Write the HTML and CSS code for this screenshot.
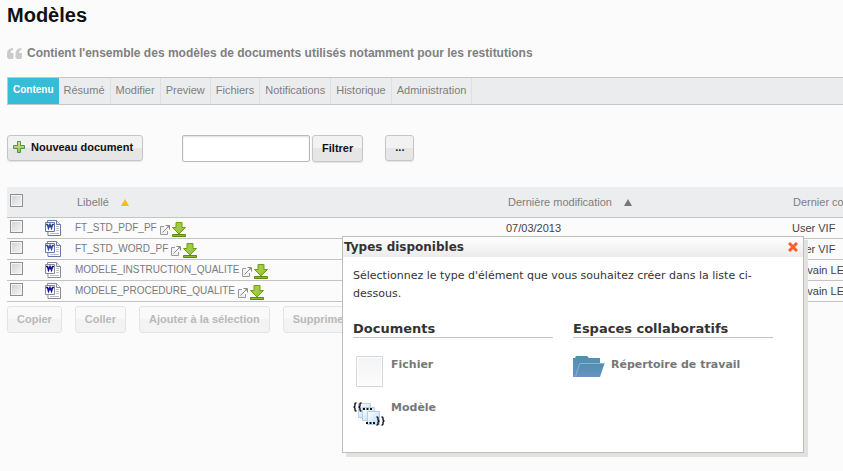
FILE: index.html
```html
<!DOCTYPE html>
<html lang="fr">
<head>
<meta charset="utf-8">
<title>Modèles</title>
<link rel="stylesheet" href="styles.css">
</head>
<body>
<svg class="defs" aria-hidden="true">
  <defs>
    <linearGradient id="green" x1="0" y1="0" x2="1" y2="1"><stop offset="0" stop-color="#a3ce2c"/><stop offset=".5" stop-color="#a3cb45"/><stop offset="1" stop-color="#8ab92a"/></linearGradient>
    <linearGradient id="plus" x1="0" y1="0" x2="0" y2="1"><stop offset="0" stop-color="#d9e873"/><stop offset="1" stop-color="#8cc34a"/></linearGradient>
    <linearGradient id="folder" x1="0" y1="0" x2="0" y2="1"><stop offset="0" stop-color="#4f8fae"/><stop offset="1" stop-color="#6b92c3"/></linearGradient>
    <linearGradient id="sheet" x1="0" y1="0" x2="0" y2="1"><stop offset="0" stop-color="#f3f4f5"/><stop offset="1" stop-color="#fcfcfd"/></linearGradient>
    <linearGradient id="card" x1="0" y1="0" x2="1" y2="1"><stop offset="0" stop-color="#ffffff"/><stop offset="1" stop-color="#b5daf6"/></linearGradient>
    <symbol id="word" viewBox="0 0 16 16">
      <path d="M2.500.5h9l4 4v11h-12.500z" fill="#fff" stroke="currentColor"/>
      <path d="M11.500.5v4h4" fill="#e4e9f3" stroke="currentColor"/>
      <path d="M11 6.500h3M11 8.500h3M11 10.500h3M5 13.500h9" stroke="#b6bfd2"/>
      <path d="M.5 2.500h9v9h-9z" fill="#fff" stroke="currentColor"/>
      <path d="M1 4.500h1.500l1 3.500 1.500-3.500 1.500 3.500 1-3.500H9" fill="none" stroke="inherit" stroke-width="1.600"/>
    </symbol>
    <symbol id="open" viewBox="0 0 10 10">
      <path d="M4 1.500H.5v8h7V6" fill="#f2f2f2" stroke="#9a9a9a"/>
      <path d="M2.500 7.500L8.500 1.500M5.500.5h4v4" fill="none" stroke="#8a8a8a"/>
      <path d="M7 1h2v2z" fill="#8a8a8a"/>
    </symbol>
    <symbol id="down" viewBox="0 0 14 15">
      <path d="M4 .5h6v5h3.500L7 12 .5 5.500H4z" fill="url(#green)" stroke="#6f9d17"/>
      <path d="M.5 12.500h13v2H.5z" fill="#8dbb2b" stroke="#5c8a10"/>
    </symbol>
  </defs>
</svg>

<main class="page">
  <h1 class="title">Modèles</h1>
  <p class="summary">
    <svg class="quote" viewBox="0 0 15 11" aria-hidden="true"><path d="M6 0v2C4.300 2.200 3.600 3.300 3.700 5H6.500v4.500L5.500 11H1.500L0 9.500V6C0 2.500 2 .2 6 0zM14.500 0v2c-1.700.2-2.400 1.300-2.300 3H15v4.500L14 11h-4L8.500 9.500V6c0-3.500 2-5.800 6-6z" fill="#cbcbcb"/></svg>
    Contient l'ensemble des modèles de documents utilisés notamment pour les restitutions
  </p>

  <nav class="tabs">
    <a class="tab active" href="#">Contenu</a>
    <a class="tab" href="#">Résumé</a>
    <a class="tab" href="#">Modifier</a>
    <a class="tab" href="#">Preview</a>
    <a class="tab" href="#">Fichiers</a>
    <a class="tab" href="#">Notifications</a>
    <a class="tab" href="#">Historique</a>
    <a class="tab" href="#">Administration</a>
  </nav>

  <div class="toolbar">
    <button class="btn new" type="button">
      <svg class="plus" viewBox="0 0 12 12" aria-hidden="true"><path d="M4.500.5h3v4h4v3h-4v4h-3v-4h-4v-3h4z" fill="url(#plus)" stroke="#4d9160"/></svg>
      Nouveau document
    </button>
    <form class="filter">
      <input class="field" type="text" aria-label="Filtrer">
      <button class="btn tall" type="button">Filtrer</button>
    </form>
    <button class="btn" type="button">...</button>
  </div>

  <div class="listing">
    <table class="docs">
      <colgroup><col class="c-check"><col class="c-icon"><col class="c-label"><col class="c-date"><col></colgroup>
      <thead>
        <tr>
          <th><input class="check" type="checkbox" aria-label="Tout sélectionner"></th>
          <th></th>
          <th>Libellé <svg class="sort first" viewBox="0 0 8 7" aria-hidden="true"><path d="M4 0l4 7H0z" fill="#f0bf1d"/></svg></th>
          <th>Dernière modification <svg class="sort" viewBox="0 0 8 7" aria-hidden="true"><path d="M4 0l4 7H0z" fill="#777"/></svg></th>
          <th>Dernier co</th>
        </tr>
      </thead>
      <tbody>
        <tr>
          <td><input class="check" type="checkbox" aria-label="FT_STD_PDF_PF"></td>
          <td><svg class="word" aria-hidden="true"><use href="#word"/></svg></td>
          <td><div class="name"><a href="#">FT_STD_PDF_PF</a><svg class="open" aria-hidden="true"><use href="#open"/></svg><svg class="down" aria-hidden="true"><use href="#down"/></svg></div></td>
          <td>07/03/2013</td>
          <td>User VIF</td>
        </tr>
        <tr>
          <td><input class="check" type="checkbox" aria-label="FT_STD_WORD_PF"></td>
          <td><svg class="word" aria-hidden="true"><use href="#word"/></svg></td>
          <td><div class="name"><a href="#">FT_STD_WORD_PF</a><svg class="open" aria-hidden="true"><use href="#open"/></svg><svg class="down" aria-hidden="true"><use href="#down"/></svg></div></td>
          <td></td>
          <td>User VIF</td>
        </tr>
        <tr>
          <td><input class="check" type="checkbox" aria-label="MODELE_INSTRUCTION_QUALITE"></td>
          <td><svg class="word old" aria-hidden="true"><use href="#word"/></svg></td>
          <td><div class="name"><a href="#">MODELE_INSTRUCTION_QUALITE</a><svg class="open" aria-hidden="true"><use href="#open"/></svg><svg class="down" aria-hidden="true"><use href="#down"/></svg></div></td>
          <td></td>
          <td>Sylvain LE</td>
        </tr>
        <tr>
          <td><input class="check" type="checkbox" aria-label="MODELE_PROCEDURE_QUALITE"></td>
          <td><svg class="word old" aria-hidden="true"><use href="#word"/></svg></td>
          <td><div class="name"><a href="#">MODELE_PROCEDURE_QUALITE</a><svg class="open" aria-hidden="true"><use href="#open"/></svg><svg class="down" aria-hidden="true"><use href="#down"/></svg></div></td>
          <td></td>
          <td>Sylvain LE</td>
        </tr>
      </tbody>
    </table>
  </div>

  <div class="actions">
    <button class="btn tall" type="button" disabled>Copier</button>
    <button class="btn tall" type="button" disabled>Coller</button>
    <button class="btn tall" type="button" disabled>Ajouter à la sélection</button>
    <button class="btn tall" type="button" disabled>Supprimer</button>
  </div>
</main>

<section class="dialog" role="dialog" aria-labelledby="dialog-title">
  <header class="dialog-head">
    <h2 class="dialog-title" id="dialog-title">Types disponibles</h2>
    <button class="close" type="button" aria-label="Fermer"><svg viewBox="0 0 10 10" aria-hidden="true"><path d="M1 1l8 8M9 1L1 9" stroke="#ff5f2b" stroke-width="3"/></svg></button>
  </header>
  <div class="dialog-body">
    <p class="intro">Sélectionnez le type d'élément que vous souhaitez créer dans la liste ci-dessous.</p>
    <div class="groups">
      <section>
        <h3 class="group-title">Documents</h3>
        <a class="type" href="#">
          <svg class="type-icon" viewBox="0 0 32 32" aria-hidden="true"><path d="M3.500.5h26v30h-26z" fill="#fff" stroke="#d5d6d8"/><path d="M5 2h23v27H5z" fill="url(#sheet)"/></svg>
          Fichier
        </a>
        <a class="type" href="#">
          <svg class="type-icon" viewBox="0 0 32 32" aria-hidden="true">
            <g fill="url(#card)" stroke="#b5cfe9"><path d="M5.500 4.500h12v14h-12z"/><path d="M9.500 8.500h12v13h-12z"/><path d="M14.500 12.500h12v13h-12z"/></g>
            <g fill="none" stroke="#111" stroke-width="1.400"><path id="brace" d="M3.500 4H3Q2 4 2 5v1.500Q2 8 .5 8 2 8 2 9.500V11q0 1 1 1h.5"/><path d="M8.500 4H8Q7 4 7 5v1.500Q7 8 5.500 8 7 8 7 9.500V11q0 1 1 1h.5"/><path d="M23.500 18h.5q1 0 1 1v1.500q0 1.500 1.500 1.500Q25 22 25 23.500V25q0 1-1 1h-.5M28.500 18h.5q1 0 1 1v1.500q0 1.500 1.500 1.500Q30 22 30 23.500V25q0 1-1 1h-.5"/></g>
            <path d="M10 9h2v2h-2zM13.500 9h2v2h-2zM17 9h2v2h-2zM13 23h2v2h-2zM16.500 23h2v2h-2zM20 23h2v2h-2z" fill="#111"/>
          </svg>
          Modèle
        </a>
      </section>
      <section>
        <h3 class="group-title">Espaces collaboratifs</h3>
        <a class="type" href="#">
          <svg class="type-icon" viewBox="0 0 32 32" aria-hidden="true"><path d="M0 2h2l1-2h11l2 2h11v19H0z" fill="url(#folder)"/><path d="M7 7.500h24.500L27 21H2z" fill="url(#folder)"/><path d="M2.500 20.500l4-12.500 1.500-.5h23.500" fill="none" stroke="#8bb4d2"/></svg>
          Répertoire de travail
        </a>
      </section>
    </div>
  </div>
</section>
</body>
</html>
```
FILE: styles.css
```css
* { box-sizing: border-box; }

html { overflow: hidden; }

body {
  margin: 0;
  background: #fbfbfb;
  color: #444;
  font: 11px/14px "Liberation Sans", Arial, sans-serif;
}

a { color: inherit; text-decoration: none; }

.defs { position: absolute; width: 0; height: 0; }

.page { padding: 3px 0 0 7px; }

.title {
  margin: 0;
  color: #111;
  font-size: 20px;
  line-height: 24px;
}

.summary {
  display: flex;
  align-items: center;
  gap: 5px;
  margin: 18px 0 16px;
  color: #808080;
  font-size: 12px;
  font-weight: bold;
  line-height: 16px;
}

.quote { width: 15px; height: 11px; }

.tabs {
  display: flex;
  height: 28px;
  border: solid #c6c7c9;
  border-width: 1px 0 1px 1px;
  background: #ebecee;
}

.tab {
  padding: 5px 5px 0;
  border-right: 1px solid #dedfe1;
  color: #7e7e7e;
}

.tab.active {
  border-right: 0;
  background: #35bdd7;
  color: #fff;
  font-size: 10px;
  font-weight: bold;
}

.toolbar {
  display: flex;
  align-items: flex-start;
  margin-top: 30px;
}

.btn {
  display: flex;
  align-items: center;
  height: 26px;
  padding: 0 9px 2px;
  border: 1px solid #c6c6c6;
  border-radius: 3px;
  background: linear-gradient(#f2f2f2 50%, #e6e6e6 50%);
  box-shadow: 0 1px 1px #e3e3e3;
  color: #111;
  font: bold 11px/14px "Liberation Sans", Arial, sans-serif;
  white-space: nowrap;
}

.btn.tall { height: 27px; }

.btn:disabled {
  border-color: #e3e3e3;
  background: linear-gradient(#f9f9f9 50%, #f3f3f3 50%);
  box-shadow: none;
  color: #b9b9b9;
}

.new { gap: 6px; padding-left: 5px; }

.plus { width: 12px; height: 12px; }

.filter {
  display: flex;
  gap: 2px;
  margin: 0 22px 0 39px;
}

.field {
  width: 128px;
  height: 27px;
  border: 1px solid #b9b9b9;
  border-radius: 2px;
  background: #fff;
  box-shadow: inset 0 1px 2px #ddd;
}

.listing { margin-top: 25px; overflow: hidden; }

.docs {
  width: 100%;
  border-collapse: separate;
  border-spacing: 0;
  table-layout: fixed;
}

.c-check, .c-icon { width: 34px; }
.c-label { width: 431px; }
.c-date { width: 286px; }

.docs th, .docs td {
  padding: 0;
  border-bottom: 1px solid #c4c4c4;
  font-weight: normal;
  text-align: left;
  white-space: nowrap;
}

.docs th {
  height: 31px;
  padding-left: 2px;
  background: #ecedef;
  color: #7e7e7e;
}

.docs th:last-child { padding-left: 1px; }

.docs td { height: 21px; }

.docs th:first-child,
.docs td:first-child { padding-left: 3px; }
.docs td:nth-child(2) { padding-left: 4px; }

.check {
  display: block;
  appearance: none;
  width: 13px;
  height: 13px;
  margin: 0 0 4px;
  border: 1px solid #8e8f8f;
  background: linear-gradient(135deg, #cfd1d6, #f6f6f6);
  box-shadow: inset 0 0 0 1px #f4f4f4;
}

.word {
  display: block;
  width: 16px;
  height: 16px;
  color: #6878a8;
  stroke: #2b479d;
}

.word.old { color: #8a8a94; stroke: #1a1396; }

.name {
  display: flex;
  align-items: center;
  color: #7a7a7a;
  font-size: 10px;
}

.open { width: 10px; height: 10px; margin: 3px 2px 0 3px; }
.down { width: 14px; height: 15px; margin-top: 3px; }

.sort { width: 8px; height: 7px; margin-left: 9px; }

.actions { display: flex; gap: 13px; margin-top: 4px; }

.dialog {
  position: absolute;
  top: 236px;
  left: 342px;
  width: 462px;
  border: 1px solid #c3bdb7;
  background: #fff;
  box-shadow: 4px 4px 0 #e1e1e1;
  color: #333;
  font: 11px/18px "DejaVu Sans", Verdana, sans-serif;
}

.dialog-head {
  display: flex;
  align-items: center;
  justify-content: space-between;
  height: 20px;
  padding: 0 5px 0 1px;
  background: linear-gradient(#fff, #ebebeb);
}

.dialog-title { margin: 0; font-size: 12px; }

.close {
  width: 10px;
  height: 10px;
  padding: 0;
  border: 0;
  background: none;
}

.close svg { display: block; }

.dialog-body { padding: 10px 30px 10px 10px; }

.intro { margin: 0; }

.groups {
  display: grid;
  grid-template-columns: 1fr 1fr;
  gap: 20px;
  margin-top: 18px;
}

.group-title {
  margin: 0 0 18px;
  border-bottom: 1px solid #c4c4c4;
  font-size: 13px;
  line-height: 16px;
}

.type {
  display: flex;
  gap: 6px;
  height: 43px;
  color: #777;
  font-weight: bold;
}

.type-icon { width: 32px; height: 32px; }
```
